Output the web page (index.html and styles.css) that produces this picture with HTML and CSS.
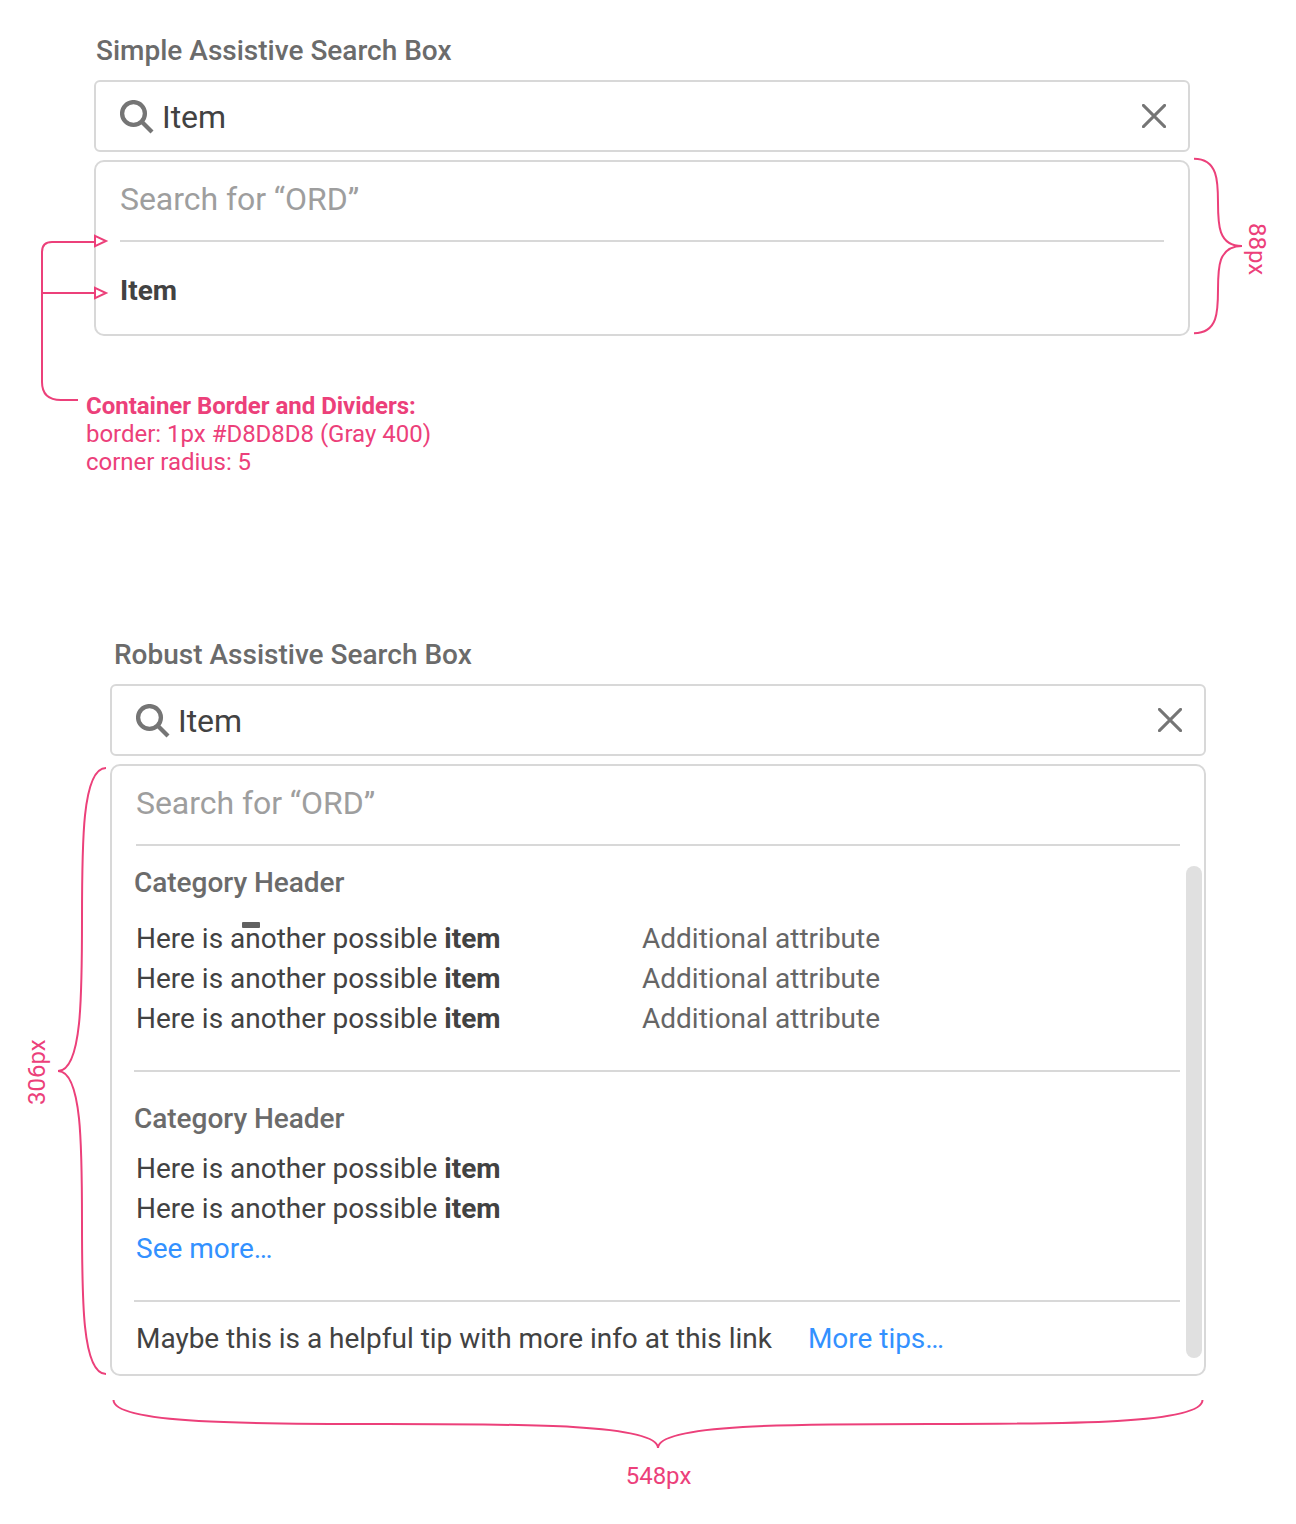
FILE: index.html
```html
<!DOCTYPE html>
<html lang="en">
<head>
<meta charset="utf-8">
<title>Assistive Search Box</title>
<link rel="stylesheet" href="styles.css">
</head>
<body>
<main class="sheet">
  <section class="example example-simple">
    <h2 class="title">Simple Assistive Search Box</h2>
    <div class="field">
      <svg class="icon-search" viewBox="0 0 34 34"><circle cx="13.5" cy="13.5" r="11.4"/><path d="M21.5 21.5L32 32"/></svg>
      <span class="value">Item</span>
      <svg class="icon-close" viewBox="0 0 24 24"><path d="M1.4 1.4L22.6 22.6M22.6 1.4L1.4 22.6"/></svg>
    </div>
    <div class="panel">
      <div class="hint">Search for “ORD”</div>
      <hr class="divider">
      <div class="single"><b>Item</b></div>
    </div>
  </section>

  <div class="note">
    <strong>Container Border and Dividers:</strong>
    <span class="note-border">border: 1px #D8D8D8 (Gray 400)</span>
    <span class="note-radius">corner radius: 5</span>
  </div>

  <section class="example example-robust">
    <h2 class="title">Robust Assistive Search Box</h2>
    <div class="field">
      <svg class="icon-search" viewBox="0 0 34 34"><circle cx="13.5" cy="13.5" r="11.4"/><path d="M21.5 21.5L32 32"/></svg>
      <span class="value">Item</span>
      <svg class="icon-close" viewBox="0 0 24 24"><path d="M1.4 1.4L22.6 22.6M22.6 1.4L1.4 22.6"/></svg>
    </div>
    <div class="panel">
      <div class="hint">Search for “ORD”</div>
      <hr class="divider">
      <h3 class="category">Category Header</h3>
      <div class="rows rows-first">
        <div class="row"><span>Here is another possible <b>item</b></span><span class="attribute">Additional attribute</span></div>
        <div class="row"><span>Here is another possible <b>item</b></span><span class="attribute">Additional attribute</span></div>
        <div class="row"><span>Here is another possible <b>item</b></span><span class="attribute">Additional attribute</span></div>
        <i class="marker"></i>
      </div>
      <hr class="divider divider-wide">
      <h3 class="category category-second">Category Header</h3>
      <div class="rows">
        <div class="row"><span>Here is another possible <b>item</b></span></div>
        <div class="row"><span>Here is another possible <b>item</b></span></div>
        <div class="row"><a class="link">See more…</a></div>
      </div>
      <hr class="divider divider-wide">
      <div class="tip"><span>Maybe this is a helpful tip with more info at this link</span><a class="link">More tips…</a></div>
      <i class="scrollbar"></i>
    </div>
  </section>
  <div class="width-label">548px</div>

  <svg class="annotations" viewBox="0 0 1296 1524">
    <path d="M95 242H52Q42 242 42 252V382Q42 400 61 400H78M42 293H95"/>
    <path class="arrow" d="M95 235.8L106 241L95 246.2ZM95 287.8L106 293L95 298.2Z"/>
    <path d="M1194 158.8C1218 158.8 1218 182 1218 202.4C1218 224 1218 246 1242 246C1218 246 1218 268 1218 289.6C1218 311 1218 333.2 1194 333.2"/>
    <path d="M106 768C82 768 82 844 82 919.5C82 995 82 1071 58 1071C82 1071 82 1147 82 1222.5C82 1298 82 1374 106 1374"/>
    <path d="M113.5 1400C113.5 1424 250 1424 386 1424C522 1424 658 1424 658 1448C658 1424 794 1424 930 1424C1066 1424 1202.5 1424 1202.5 1400"/>
    <text transform="translate(1249 223) rotate(90)">88px</text>
    <text transform="translate(45 1105) rotate(-90)">306px</text>
  </svg>
</main>
</body>
</html>
```
FILE: styles.css
```css
* {
  box-sizing: border-box;
}

body {
  margin: 0;
  background: #fff;
  color: #424242;
  font-family: Roboto, sans-serif;
  font-size: 28px;
  line-height: 40px;
}

.sheet {
  position: relative;
  width: 1296px;
  height: 1524px;
  padding-top: 31px;
}

.example {
  width: 1096px;
  margin-left: 94px;
}

.example-robust {
  margin-top: 159px;
  margin-left: 110px;
}

.title,
.category {
  margin: 0;
  color: #6b6b6b;
  font-size: 28px;
  font-weight: 500;
}

.title {
  padding-left: 2px;
}

.example-robust .title {
  padding-left: 4px;
}

.field {
  display: flex;
  align-items: center;
  height: 72px;
  margin-top: 9px;
  padding: 0 22px 0 24px;
  border: 2px solid #d8d8d8;
  border-radius: 6px;
}

.icon-search {
  width: 34px;
  height: 34px;
  margin-top: 1px;
  fill: none;
  stroke: #757575;
  stroke-width: 4.3;
}

.value {
  flex: 1;
  margin-left: 8px;
  padding-top: 2px;
  font-size: 32px;
  letter-spacing: -0.05px;
  line-height: 68px;
}

.icon-close {
  width: 24px;
  height: 24px;
  fill: none;
  stroke: #757575;
  stroke-width: 3;
  stroke-linecap: round;
}

.panel {
  position: relative;
  margin-top: 8px;
  padding: 0 24px;
  border: 2px solid #d8d8d8;
  border-radius: 10px;
}

.hint {
  height: 78px;
  color: #9e9e9e;
  font-size: 32px;
  letter-spacing: -0.05px;
  line-height: 74px;
}

.divider {
  height: 2px;
  margin: 0;
  border: 0;
  background: #d8d8d8;
}

.divider-wide {
  margin: 31px 0 0 -2px;
}

.single {
  padding: 29px 0 23px;
}

b,
strong {
  font-weight: 700;
}

.category {
  margin: 17px 0 0 -2px;
  letter-spacing: -0.03px;
}

.category-second {
  margin-top: 27px;
}

.rows {
  position: relative;
  margin-top: 10px;
}

.rows-first {
  margin-top: 16px;
}

.row {
  display: grid;
  grid-template-columns: 506px 1fr;
}

.attribute {
  color: #666;
}

.link {
  color: #3391ff;
}

.tip {
  display: flex;
  gap: 36px;
  padding: 17px 0 15px;
  letter-spacing: -0.02px;
}

.marker {
  position: absolute;
  top: 3px;
  left: 106px;
  width: 18px;
  height: 6px;
  border-radius: 1px;
  background: #616161;
}

.scrollbar {
  position: absolute;
  top: 100px;
  right: 2px;
  bottom: 16px;
  width: 16px;
  border-radius: 8px;
  background: #e0e0e0;
}

.note {
  display: flex;
  flex-direction: column;
  margin: 56px 0 0 86px;
  color: #ec407a;
  font-size: 24px;
  letter-spacing: -0.02px;
  line-height: 28px;
}

.width-label {
  margin: 86px 0 0 21px;
  color: #ec407a;
  font-size: 24px;
  line-height: 28px;
  text-align: center;
}

.annotations {
  position: absolute;
  top: 0;
  left: 0;
  width: 1296px;
  height: 1524px;
  fill: none;
  stroke: #ec407a;
  stroke-width: 2;
  pointer-events: none;
}

.annotations .arrow {
  fill: #fff;
}

.annotations text {
  fill: #ec407a;
  stroke: none;
  font-size: 24px;
}
```
